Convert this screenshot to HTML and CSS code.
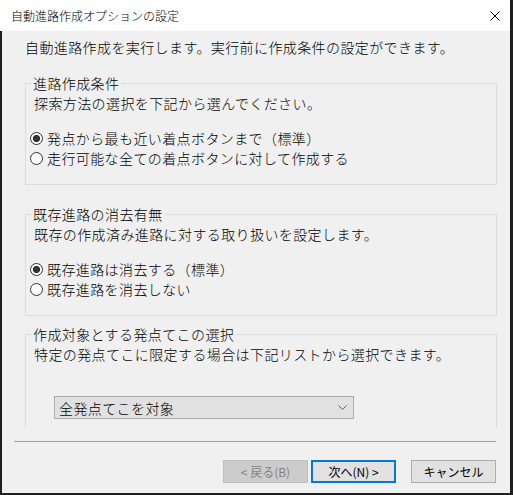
FILE: index.html
```html
<!DOCTYPE html>
<html lang="ja">
<head>
<meta charset="utf-8">
<title>自動進路作成オプションの設定</title>
<link rel="stylesheet" href="styles.css">
</head>
<body>
<div class="window">
  <div class="titlebar">
    <span class="title">自動進路作成オプションの設定</span>
    <svg class="close" width="10" height="10" viewBox="0 0 10 10" aria-hidden="true"><path d="M0.5 0.5L9.5 9.5M9.5 0.5L0.5 9.5" stroke="#000" stroke-width="1" fill="none"/></svg>
  </div>
  <div class="content">
    <p class="intro">自動進路作成を実行します。実行前に作成条件の設定ができます。</p>

    <fieldset class="group group-1">
      <legend>進路作成条件</legend>
      <p class="desc">探索方法の選択を下記から選んでください。</p>
      <div class="options">
        <label class="option"><input class="radio" type="radio" name="route" checked><span>発点から最も近い着点ボタンまで（標準）</span></label>
        <label class="option"><input class="radio" type="radio" name="route"><span>走行可能な全ての着点ボタンに対して作成する</span></label>
      </div>
    </fieldset>

    <fieldset class="group group-2">
      <legend>既存進路の消去有無</legend>
      <p class="desc">既存の作成済み進路に対する取り扱いを設定します。</p>
      <div class="options">
        <label class="option"><input class="radio" type="radio" name="erase" checked><span>既存進路は消去する（標準）</span></label>
        <label class="option"><input class="radio" type="radio" name="erase"><span>既存進路を消去しない</span></label>
      </div>
    </fieldset>

    <fieldset class="group group-3">
      <legend>作成対象とする発点てこの選択</legend>
      <p class="desc">特定の発点てこに限定する場合は下記リストから選択できます。</p>
      <div class="select">
        <span>全発点てこを対象</span>
        <svg class="chevron" width="9" height="5" viewBox="0 0 9 5" aria-hidden="true"><path d="M0.5 0.5L4.5 4.5L8.5 0.5" stroke="#606060" stroke-width="1" fill="none"/></svg>
      </div>
    </fieldset>

    <div class="separator"></div>

    <div class="buttons">
      <button class="btn btn-back" disabled>&lt; 戻る(B)</button>
      <button class="btn btn-next">次へ(N) &gt;</button>
      <button class="btn btn-cancel">キャンセル</button>
    </div>
  </div>
</div>
</body>
</html>
```

FILE: styles.css
```css
* {
  box-sizing: border-box;
}

body {
  margin: 0;
  font-family: "Noto Sans CJK JP", "Noto Sans", sans-serif;
  font-weight: 300;
  color: #000;
  background: #f0f0f0;
}

.window {
  width: 513px;
  height: 495px;
  display: flex;
  flex-direction: column;
  border-right: 3px solid #1f1f1f;
  border-bottom: 2px solid #1f1f1f;
}

.titlebar {
  height: 31px;
  flex: none;
  background: #fff;
  display: flex;
  align-items: center;
  justify-content: space-between;
  padding: 0 10px 0 11px;
  font-size: 12px;
}

.close {
  display: block;
}

.content {
  flex: 1;
  background: #f0f0f0;
  border-left: 2px solid #1f1f1f;
  padding: 6px 13px 0 23px;
  font-size: 14px;
  letter-spacing: 0.4px;
  display: flex;
  flex-direction: column;
}

.intro {
  margin: 0;
  line-height: 20px;
}

.group {
  margin: 0;
  padding: 2px 8px 16px;
  border: 1px solid #dcdcdc;
  min-width: 0;
}

.group legend {
  padding: 0 2px;
  margin-left: -3px;
  line-height: 18px;
}

.group-1 {
  margin-top: 17px;
}

.group-2 {
  margin-top: 20px;
}

.group-3 {
  margin-top: 9px;
  padding-bottom: 9px;
  border-bottom: none;
}

.desc {
  margin: 0;
  line-height: 18px;
}

.options {
  margin: 16px 0 0 -4px;
  display: flex;
  flex-direction: column;
}

.option {
  display: flex;
  align-items: center;
  gap: 4px;
  height: 20px;
  line-height: 20px;
}

.radio {
  appearance: none;
  -webkit-appearance: none;
  width: 13px;
  height: 13px;
  margin: 0;
  border: 1px solid #333;
  border-radius: 50%;
  background: #fff;
  flex: none;
}

.radio:checked {
  background: radial-gradient(circle, #333 0 3.3px, #fff 3.9px);
}

.select {
  margin: 33px 0 0 20px;
  width: 300px;
  height: 23px;
  border: 1px solid #adadad;
  background: #e1e1e1;
  display: flex;
  align-items: center;
  justify-content: space-between;
  padding: 0 6px 0 4px;
  line-height: 20px;
}

.chevron {
  display: block;
}

.separator {
  margin: 13px 1px 0 -11px;
  height: 1px;
  background: #a0a0a0;
}

.buttons {
  margin: 18px 1px 0 0;
  display: flex;
  justify-content: flex-end;
  letter-spacing: 0;
}

.btn {
  width: 85px;
  height: 23px;
  padding: 0;
  font-family: "Noto Sans CJK JP", "Noto Sans", sans-serif;
  font-weight: 400;
  font-size: 12px;
  line-height: 18px;
  color: #000;
  background: #e1e1e1;
  border: 1px solid #adadad;
  border-radius: 0;
}

.btn-back {
  color: #838383;
  background: #cccccc;
  border-color: #bfbfbf;
}

.btn-next {
  margin-left: 3px;
  border: 2px solid #0078d7;
}

.btn-cancel {
  margin-left: 15px;
}
```
